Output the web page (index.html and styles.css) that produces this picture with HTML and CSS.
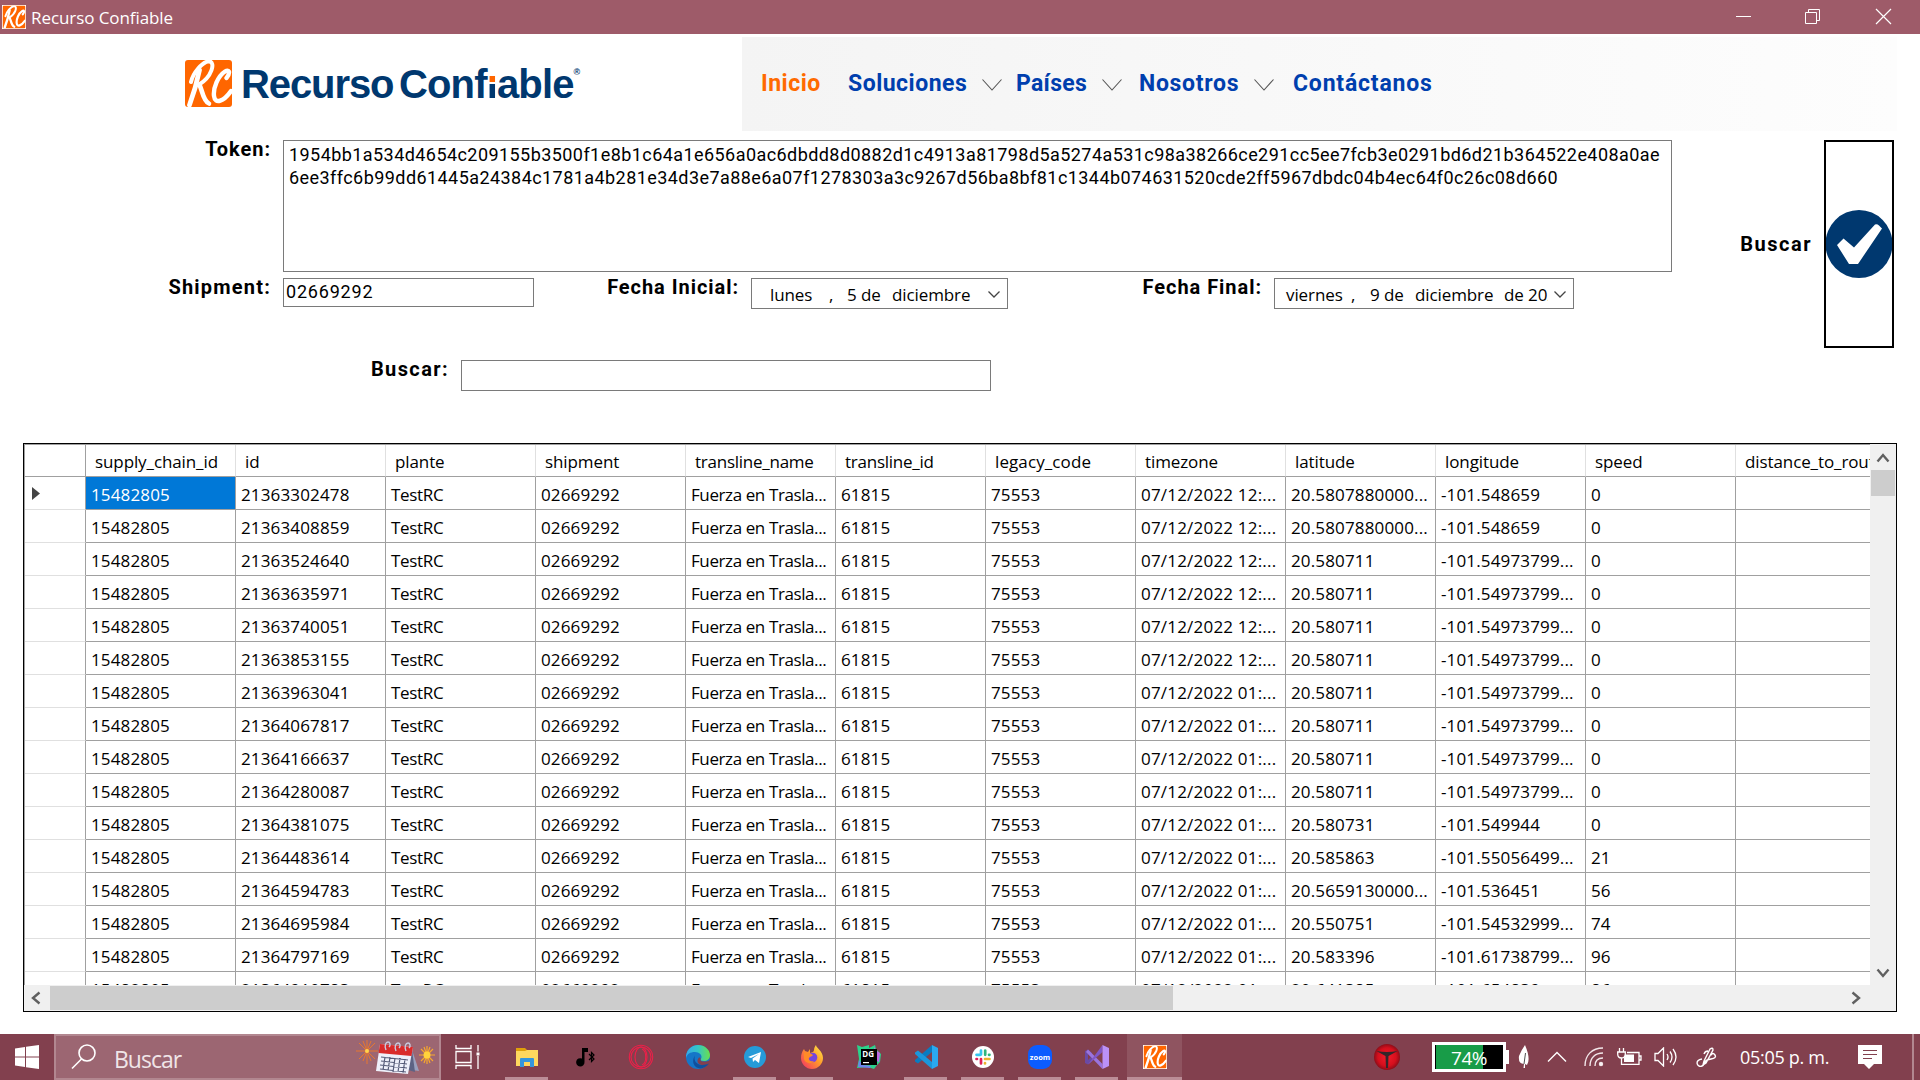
FILE: index.html
```html
<!DOCTYPE html>
<html lang="es">
<head>
<meta charset="utf-8">
<title>Recurso Confiable</title>
<link rel="stylesheet" href="styles.css">
</head>
<body>
<svg width="0" height="0" class="defs">
  <symbol id="rc" viewBox="0 0 47 47" preserveAspectRatio="none">
    <rect width="47" height="47" rx="3" fill="#ff6600"/>
    <g fill="none" stroke="#fff" stroke-linecap="round" stroke-linejoin="round">
      <path d="M14.500 10C12 22 9 33 4.500 45" stroke-width="4.800"/>
      <path d="M6 22C8 13 17 2 24 1.200C31 2 27 17 13.500 25" stroke-width="4"/>
      <path d="M14.500 25C17 29 18 41 24 43.500" stroke-width="4.600"/>
      <path d="M41.500 18C46 12 44 9 40 11.500C33 16 28 28 29 36C30 45 39 41 46 31" stroke-width="4.400"/>
    </g>
  </symbol>
</svg>

<header class="titlebar">
  <svg class="title-icon" width="24" height="24" viewBox="0 0 24 24"><rect width="24" height="24" fill="#fff"/><use href="#rc" x=".5" y=".5" width="23" height="23"/></svg>
  <span class="title-text">Recurso Confiable</span>
  <svg class="win-buttons" width="162" height="34" viewBox="0 0 162 34" fill="none" stroke="#fff">
    <path d="M1 16.500h15"/>
    <path d="M70.500 12.500h11v11h-11zM73.500 12v-2.500h11v11h-2.500"/>
    <path d="M141 9l15 15M156 9l-15 15" stroke-width="1.200"/>
  </svg>
</header>

<main class="app">
  <div class="brandbar">
    <svg class="logo-mark" width="47" height="47"><use href="#rc" width="47" height="47"/></svg>
    <div class="logo-text"><span class="w1">Recurso</span><span class="w2">Conf<span class="logo-i">i</span>able</span><span class="reg">®</span></div>
    <nav class="menu">
      <span class="m active">Inicio</span>
      <span class="m solu">Soluciones</span><svg class="chev" width="20" height="14"><path d="M.5 1.500L10 12L19.500 1.500"/></svg>
      <span class="m pais">Países</span><svg class="chev" width="20" height="14"><path d="M.5 1.500L10 12L19.500 1.500"/></svg>
      <span class="m noso">Nosotros</span><svg class="chev" width="20" height="14"><path d="M.5 1.500L10 12L19.500 1.500"/></svg>
      <span class="m cont">Contáctanos</span>
    </nav>
  </div>

  <section class="form">
    <div class="fields">
      <div class="row first">
        <span class="label l1">Token:</span>
        <div class="box token"><div>1954bb1a534d4654c209155b3500f1e8b1c64a1e656a0ac6dbdd8d0882d1c4913a81798d5a5274a531c98a38266ce291cc5ee7fcb3e0291bd6d21b364522e408a0ae</div><div>6ee3ffc6b99dd61445a24384c1781a4b281e34d3e7a88e6a07f1278303a3c9267d56ba8bf81c1344b074631520cde2ff5967dbdc04b4ec64f0c26c08d660</div></div>
      </div>
      <div class="row second">
        <span class="label l1">Shipment:</span>
        <div class="box ship">02669292</div>
        <span class="label l2">Fecha Inicial:</span>
        <div class="box date d1"><span>lunes</span><span>,</span><span>5 de</span><span>diciembre</span><svg width="14" height="9"><path d="M1.500 1.500L7 7L12.500 1.500"/></svg></div>
        <span class="label l3">Fecha Final:</span>
        <div class="box date d2"><span>viernes</span><span>,</span><span>9 de</span><span>diciembre</span><span class="yr">de 2022</span><svg width="14" height="9"><path d="M1.500 1.500L7 7L12.500 1.500"/></svg></div>
      </div>
      <div class="row third">
        <span class="label l4">Buscar:</span>
        <div class="box find"></div>
      </div>
    </div>
    <div class="go">
      <span class="label">Buscar</span>
      <div class="go-button">
        <svg width="66" height="68" viewBox="0 0 66 68"><ellipse cx="33" cy="34" rx="33.500" ry="34" fill="#00386f"/><path d="M11 35l6.500-6.500 10.500 9L49 14.500q2-1 4 1l3 3L32 54h-9z" fill="#fff"/></svg>
      </div>
    </div>
  </section>

  <section class="grid">
    <div class="view" id="view"></div>
    <div class="vbar">
      <svg width="14" height="12"><path d="M1.500 9.500L7 3L12.500 9.500"/></svg>
      <div class="vthumb"></div>
      <svg class="down" width="14" height="12"><path d="M1.500 2.500L7 9L12.500 2.500"/></svg>
    </div>
    <div class="hbar">
      <svg width="12" height="14"><path d="M9.500 1.500L3 7L9.500 12.500"/></svg>
      <div class="hthumb"></div>
      <svg class="right" width="12" height="14"><path d="M2.500 1.500L9 7L2.500 12.500"/></svg>
    </div>
  </section>
</main>

<footer class="taskbar">
  <div class="start"><svg width="24" height="24" viewBox="0 0 24 24" fill="#fff"><path d="M0 3.500l10-1.500v9.500H0zM11 1.800L24 0v11.500H11zM0 12.500h10V22L0 20.500zM11 12.500h13V24l-13-1.800z"/></svg></div>
  <div class="search">
    <svg class="lens" width="26" height="26" fill="none" stroke="#fff" stroke-width="1.600"><circle cx="16" cy="9" r="8"/><path d="M10.500 15L1 24.500"/></svg>
    <span class="search-text">Buscar</span>
    <svg class="party" width="80" height="34" viewBox="0 0 80 34">
      <g stroke="#e8772e" stroke-width="1"><path d="M11 0v24M0 11h22M3 3l16 16M19 3L3 19M7 1l8 20M15 1L7 21"/></g>
      <circle cx="11" cy="11" r="2" fill="#ffd34d"/>
      <path d="M56 10l7 21-7-1z" fill="#9aa0bd"/><path d="M56 10l-4 20 7 2z" fill="#5d6384"/>
      <path d="M24 4l33 3-5 27-32-3z" fill="#eef0fa"/>
      <path d="M24 4l33 3-1.500 9-33-3z" fill="#d92b2b"/>
      <path d="M25 17l27 3M25 21l26 3M24 25l27 3M24 29l26 3M29 17l-2 13M34 17l-2 14M39 18l-2 14M44 18l-2 14M49 19l-2 14" stroke="#555b78" stroke-width="1.200"/>
      <g fill="none" stroke="#c9cbe0" stroke-width="1.400"><path d="M30 10c-2-5 0-8 2-8s3 3 1 5M40 11c-2-5 0-8 2-8s3 3 1 5M50 11c-2-5 0-8 2-8s3 3 1 5"/></g>
      <g stroke="#f7a72e" stroke-width="1.200"><path d="M71 6v18M63 15h16M65 9l12 12M77 9l-12 12M68 7l6 16M74 7l-6 16"/></g>
      <circle cx="71" cy="15" r="3.500" fill="#ffd23c"/>
    </svg>
  </div>
  <div class="taskview"><svg width="25" height="24" viewBox="0 0 25 24" fill="none" stroke="#fff" stroke-width="1.300"><path d="M1 0v3.500h15V0M1 24v-3.500h15V24M1 6.500h15v11H1zM23 0v6.500M23 11v13"/><rect x="21.500" y="7.500" width="3" height="3" fill="#fff" stroke="none"/></svg></div>

  <div class="app-slot open"><svg width="24" height="24" viewBox="0 0 24 24"><path d="M1 3h9l2 2v3H1z" fill="#e0a00a"/><path d="M1 6h9l2-1h11v16H1z" fill="#ffd75e"/><path d="M5 22v-8q0-1 1-1h12q1 0 1 1v8h-4v-5H9v5z" fill="#3596dc"/></svg></div>
  <div class="app-slot"><svg width="24" height="24" viewBox="0 0 24 24"><path d="M10 3h6v4h-3.500v10a4.200 4.200 0 1 1-2.500-3.500z" fill="#000"/><path d="M17 9l5 5-2.500 2.500V7.500L22 10l-5 5" fill="none" stroke="#000" stroke-width="1.200"/></svg></div>
  <div class="app-slot"><svg width="26" height="26" viewBox="0 0 26 26" fill="none" stroke="#ec2049" stroke-width="1.100"><circle cx="13" cy="13" r="11.700"/><circle cx="13" cy="13" r="10"/><ellipse cx="13" cy="13" rx="6" ry="10"/><path d="M14 5c5 2 5 14 0 16"/></svg></div>
  <div class="app-slot"><svg width="24" height="24" viewBox="0 0 24 24"><defs><linearGradient id="e1"><stop stop-color="#36a8ec"/><stop offset=".5" stop-color="#34c6c4"/><stop offset="1" stop-color="#6adf4c"/></linearGradient></defs><circle cx="12" cy="12" r="12" fill="#1576c8"/><path d="M0 11C1 4 6 0 12 0c7 0 12 5 12 10 0 4-3 6-6 6-3 0-4-1-3-2C17 10 13 7 9 7 4 7 1 9 0 13z" fill="url(#e1)"/><path d="M24 15.500V19l-2 .5c-3 2-8 1-10-1.500-1-2-.5-4 1-5.500 1 0 2 .5 1.500 1.500-.5 2 1 2.500 4 2.500 2 0 4-.5 5.500-1.500z" fill="#82404e"/><path d="M9 10.500c-2.500 7 5 12 14 8-4 6-13 7-15.500 0-.8-3 0-6 1.500-8z" fill="#104f9c"/></svg></div>
  <div class="app-slot open"><svg width="22" height="22" viewBox="0 0 22 22"><circle cx="11" cy="11" r="11" fill="#259bd8"/><path d="M4 11l13-5-2 11-4-3-2 2-.5-3.500L15 8l-8 4z" fill="#fff"/></svg></div>
  <div class="app-slot open"><svg width="24" height="24" viewBox="0 0 24 24"><defs><linearGradient id="f1" x1="1" y1="0" x2="0" y2="1"><stop stop-color="#fff04a"/><stop offset=".45" stop-color="#ff9a2a"/><stop offset="1" stop-color="#f32a6a"/></linearGradient></defs><path d="M4 4l1 2 3 1 2-3v4c2-1 4-1 4-3 0-2 1-4 2-5 0 3 7 6 7 13 0 6-5 11-11 11S1 19 1 13c0-4 1-6 3-9z" fill="url(#f1)"/><circle cx="12.500" cy="12.500" r="4.800" fill="#7646dd"/><path d="M4 8c3-2 6 0 9 2-1 2-3 1-4 3s2 4 5 3c-3 4-9 2-10-2z" fill="#ff8b27"/></svg></div>
  <div class="app-slot"><svg width="24" height="24" viewBox="0 0 24 24"><path d="M0 0l5 2 7-2v3l6-3 1 4 5 5-1 8-3 3-3 4-6-2-11 1 2-9z" fill="#2bd28b"/><path d="M17 2l3 4 3 2-1 9-4-2z" fill="#c365e5"/><path d="M2 15l4 5 8 1-1 2-12-1z" fill="#6d83ef"/><rect x="4" y="4" width="16" height="16" fill="#000"/><text x="5.300" y="11.700" class="dg">DG</text><path d="M6 17h6v1.200H6z" fill="#fff"/></svg></div>
  <div class="app-slot open"><svg width="24" height="24" viewBox="0 0 24 24"><path d="M18 0l6 3v18l-6 3z" fill="#2aa9f0"/><path d="M18 0v7L4 18.500l-3-2v-1.500z" fill="#0a7bc0"/><path d="M18 24v-7L4 5.500l-3 2V9z" fill="#1b97dc"/></svg></div>
  <div class="app-slot open"><svg width="22" height="22" viewBox="0 0 22 22"><circle cx="11" cy="11" r="11" fill="#fff"/><g stroke-width="2.700" stroke-linecap="round"><path d="M9 4.500v4M4.500 8.800h4" stroke="#36c5f0"/><path d="M13.200 4.500v4.300M17.500 8.800h-.5" stroke="#2eb67d"/><path d="M13 13h4.500M13 17.500v-.5" stroke="#ecb22e"/><path d="M9 13v4.500M4.500 13H5" stroke="#e01e5a"/></g></svg></div>
  <div class="app-slot open"><svg width="24" height="24" viewBox="0 0 24 24"><rect width="24" height="24" rx="9" fill="#0b5cff"/><text x="12" y="14.500" class="zm">zoom</text></svg></div>
  <div class="app-slot open"><svg width="24" height="24" viewBox="0 0 24 24"><path d="M0 6l3-1.500L7 8v8l-4 3.500L0 18z" fill="#6a4aa5"/><path d="M3 9v6l3-3z" fill="#82404e"/><path d="M3 4.500L17.500 19V24L1 7z" fill="#9a74dd"/><path d="M3 19.500L17.500 0v7L5 18z" fill="#8057c4"/><path d="M17.500 0L24 3v18l-6.500 3z" fill="#bb91f7"/></svg></div>
  <div class="app-slot open current"><svg width="24" height="24" viewBox="0 0 24 24"><rect width="24" height="24" fill="#fff"/><use href="#rc" x=".5" y=".5" width="23" height="23"/></svg></div>

  <div class="tray">
    <svg class="t-red" width="26" height="26" viewBox="0 0 26 26"><defs><radialGradient id="r1"><stop stop-color="#f21c2b"/><stop offset=".7" stop-color="#d50f1d"/><stop offset="1" stop-color="#8e0d18"/></radialGradient></defs><circle cx="13" cy="13" r="13" fill="url(#r1)"/><path d="M2.500 7Q13 9 23.500 7L14.500 12 14 24h-2l-.5-12z" fill="#33262a"/></svg>
    <div class="battery"><div class="level"></div><span>74%</span></div><div class="nub"></div>
    <svg class="t-leaf" width="12" height="24"><path d="M7 0Q13 14 9 20L7 19v4H5.500l.5-4Q0 19 1 11q3-7 6-11z" fill="#fff"/><path d="M7.500 8L6 19" stroke="#222" stroke-width=".8"/></svg>
    <svg class="t-chev" width="20" height="12"><path d="M1 10.500L10 1.500L19 10.500" fill="none" stroke="#fff" stroke-width="1.400"/></svg>
    <svg class="t-wifi" width="20" height="20" fill="none" stroke="#f2e6e9" stroke-width="1.400"><path d="M1 19C1 8 8 1 19 1M6 19C6 11 11 6 19 6M11 19c0-5 3-8 8-8"/><circle cx="17" cy="17" r="1.500" fill="#fff"/></svg>
    <svg class="t-plug" width="26" height="18" fill="none" stroke="#fff" stroke-width="1.300"><path d="M2.500 0v3.500M6.500 0v3.500M.7 4h7.600v2q0 4-3.800 4t-3.800-4zM4.500 10v6.300H22V4.500H10M22 8h2v4h-2"/><path d="M8 6.500h9v7.500H7V10z" fill="#fff" stroke="none"/></svg>
    <svg class="t-vol" width="24" height="20" fill="none" stroke="#fff" stroke-width="1.300"><path d="M1 6.500h3L9.500 1v18L4 13.500H1zM13 7q2 3 0 6M16 4.500q4 5.500 0 11M19 2q6 8 0 16"/></svg>
    <svg class="t-pen" width="22" height="21" fill="none" stroke="#fff" stroke-width="1.400"><path d="M8 14L14 2q3-2 3 1L10 16l-3 2zM12 4q-3 0-4 3M6 12c-8 1-5 9 0 7 3-1 2-5 5-6l4-1q6-1 4-4t-4 0"/></svg>
    <span class="clock">05:05 p. m.</span>
    <svg class="t-note" width="24" height="25"><path d="M0 0h24v19h-8l-5 5-5-5H0z" fill="#fff"/><path d="M5 5.500h14M5 9.500h14M5 13.500h9" stroke="#82404e" stroke-width="1.200"/></svg>
    <div class="peek"></div>
  </div>
</footer>
<script src="script.js"></script>
</body>
</html>
```
FILE: styles.css
```css
* { box-sizing: border-box; }
body { margin: 0; width: 1920px; height: 1080px; overflow: hidden; display: flex; flex-direction: column; background: #fff; color: #000; font: 17px "Open Sans", sans-serif; }
svg { display: block; flex: none; }
.defs { position: absolute; }

.titlebar { flex: none; height: 34px; background: #9e5b69; display: flex; align-items: center; padding-left: 2px; }
.title-text { color: #fff; margin-left: 5px; line-height: 34px; letter-spacing: -.08px; padding-top: 1px; }
.win-buttons { margin-left: auto; margin-right: 23px; }

.app { flex: 1; min-height: 0; display: flex; flex-direction: column; padding-left: 23px; padding-right: 23px; }
.brandbar { flex: none; height: 97px; display: flex; padding-left: 162px; }
.logo-mark { margin-top: 26px; }
.logo-text { width: 510px; display: flex; padding: 27px 0 0 9px; font: 700 40px/46px "Liberation Sans", Arial, sans-serif; color: #00386f; white-space: nowrap; }
.w1 { width: 158px; letter-spacing: -1.100px; }
.w2 { letter-spacing: -.85px; }
.logo-i { background: linear-gradient(#fff 0 14px, #ff6600 14px 20.500px, #fff 20.500px 22px, #00386f 22px); -webkit-background-clip: text; background-clip: text; color: transparent; }
.reg { font-size: 9px; line-height: 10px; margin-top: 6px; }
.menu { flex: 1; height: 94px; margin-top: 3px; display: flex; align-items: center; padding-left: 19px; background: linear-gradient(90deg, #f4f4f4, #fdfdfd); }
.m { font: 700 23px/30px Roboto, sans-serif; letter-spacing: .5px; color: #003fae; }
.m.active { color: #ff6a00; width: 87px; }
.solu { width: 134px; } .pais { width: 86px; letter-spacing: .3px; } .noso { width: 115px; letter-spacing: .7px; } .cont { letter-spacing: .8px; }
.chev { margin-right: 14px; margin-top: 1px; fill: none; stroke: #555; stroke-width: 1.100; }
.menu .pais + .chev { margin-right: 17px; }
.menu .noso + .chev { margin-right: 19px; }

.form { flex: none; height: 303px; padding-top: 9px; display: flex; justify-content: space-between; }
.fields { width: 1649px; }
.row { display: flex; align-items: flex-start; }
.second { margin-top: 6px; height: 82px; }
.label { flex: none; text-align: right; font: 700 20px/24px Roboto, sans-serif; letter-spacing: .95px; margin-top: -3px; white-space: nowrap; }
.l1 { width: 248px; margin-right: 12px; }
.second .l1 { letter-spacing: 1.200px; }
.row.first .label { margin-top: -3px; }
.l2 { width: 205px; margin-right: 12px; }
.l3 { width: 254px; margin-right: 12px; }
.l4 { width: 426px; margin-right: 12px; }
.box { flex: none; border: 1px solid #7a7a7a; background: #fff; }
.token { width: 1389px; height: 132px; padding: 2px 0 0 5px; font: 18px/23px Roboto, sans-serif; letter-spacing: .435px; white-space: nowrap; }
.ship { width: 251px; height: 29px; padding-left: 2px; font: 18px/26px Roboto, sans-serif; letter-spacing: .8px; }
.date { height: 31px; line-height: 32px; display: grid; align-items: start; white-space: pre; letter-spacing: -.1px; }
.date svg { fill: none; stroke: #444; stroke-width: 1.300; margin-top: 11px; }
.d1 { width: 257px; padding-left: 18px; grid-template-columns: 59px 18px 45px 95px 14px; }
.d2 { width: 300px; padding-left: 11px; grid-template-columns: 65px 19px 45px 89px 44px 5px 14px; }
.d2 svg { grid-column: 7; }
.yr { overflow: hidden; }
.find { width: 530px; height: 31px; }
.third .label { margin-top: -3px; letter-spacing: 1.400px; }
.go { display: flex; align-items: center; height: 208px; margin-right: 3px; }
.go .label { margin-right: 12px; margin-top: 0; letter-spacing: 1.500px; }
.go-button { width: 70px; height: 208px; border: 2px solid #000; display: flex; align-items: center; justify-content: center; }

.grid { flex: none; width: 1874px; height: 569px; margin-top: 9px; border: 1px solid #000; display: grid; grid-template: 541px 26px / 1846px 26px; background: #f0f0f0; }
.view { overflow: hidden; background: #fff; border-left: 1px solid #a0a0a0; border-top: 1px solid #a0a0a0; }
.line { display: grid; grid-template-columns: 61px repeat(12, 150px); height: 33px; }
.line.head { height: 32px; }
.cell { height: 33px; line-height: 35.200px; padding-left: 5px; border-right: 1px solid #a0a0a0; border-bottom: 1px solid #a0a0a0; white-space: nowrap; overflow: hidden; letter-spacing: .15px; }
.cell.c2 { letter-spacing: -.3px; }
.cell.c4 { letter-spacing: -.4px; }
.cell.c7 { letter-spacing: .2px; }
.head .cell { height: 32px; line-height: 34px; padding-left: 9px; border-right-color: #e0e0e0; letter-spacing: -.1px; }
.head .c4, .head .c5 { letter-spacing: -.25px; }
.head .c6 { letter-spacing: .1px; }
.cell.mark { border-bottom-color: #e0e0e0; padding-left: 7px; display: flex; align-items: center; }
.head .cell.mark { border-right-color: #a0a0a0; border-bottom-color: #a0a0a0; }
.selected { background: #0078d7; color: #fff; }
.vbar { display: flex; flex-direction: column; align-items: center; padding-top: 8px; }
.vbar svg, .hbar svg { fill: none; stroke: #606060; stroke-width: 2.400; }
.vthumb { width: 24px; height: 26px; background: #cdcdcd; margin-top: 6px; }
.down { margin-top: auto; margin-bottom: 6px; }
.hbar { grid-column: 1; display: flex; align-items: center; padding-left: 6px; }
.hthumb { width: 1123px; height: 24px; background: #cdcdcd; margin-left: 8px; }
.right { margin-left: auto; margin-right: 8px; }

.taskbar { flex: none; height: 46px; background: #82404e; display: flex; align-items: stretch; color: #fff; }
.start { width: 54px; display: flex; align-items: center; padding-left: 15px; }
.search { width: 387px; background: #9c6672; border: 2px solid #b28790; display: flex; align-items: center; }
.lens { margin-left: 15px; }
.search-text { font-size: 23px; line-height: 42px; letter-spacing: -1px; color: #f0e5e8; margin-left: 17px; padding-top: 3px; }
.party { margin-left: auto; margin-right: 3px; }
.taskview { width: 57px; display: flex; align-items: center; padding-left: 14px; }
.app-slot { width: 57px; display: flex; align-items: center; justify-content: center; position: relative; }
.open::after { content: ""; position: absolute; left: 7px; right: 7px; bottom: 0; height: 3px; background: #bb8d97; }
.current { background: #8f5460; width: 55px; margin-left: 2px; }
.current::after { left: 0; right: 0; }
.dg { font: 700 8px "Open Sans", sans-serif; fill: #fff; }
.zm { font: 700 7.500px "Open Sans", sans-serif; fill: #fff; text-anchor: middle; }
.tray { margin-left: auto; display: flex; align-items: center; }
.battery { width: 74px; height: 30px; border: 3px solid #fff; background: #000; margin-left: 32px; position: relative; display: flex; align-items: center; justify-content: center; }
.level { position: absolute; left: 1px; top: 0; width: 47px; height: 24px; background: #189c48; }
.battery span { position: relative; font-size: 19px; letter-spacing: -.5px; line-height: 24px; padding-top: 1px; }
.nub { width: 3px; height: 14px; background: #fff; }
.t-leaf { margin-left: 9px; }
.t-chev { margin-left: 17px; }
.t-wifi { margin-left: 17px; }
.t-plug { margin-left: 13px; }
.t-vol { margin-left: 11px; }
.t-pen { margin-left: 18px; }
.clock { margin-left: 22px; width: 91px; font-size: 18px; letter-spacing: -.3px; white-space: nowrap; }
.t-note { margin-left: 27px; }
.peek { width: 2px; height: 46px; background: #b28790; margin-left: 30px; margin-right: 6px; }
```
FILE: script.js
```js
const columns = ["supply_chain_id", "id", "plante", "shipment", "transline_name", "transline_id",
  "legacy_code", "timezone", "latitude", "longitude", "speed", "distance_to_route"];

// id, hour, latitude, longitude, speed
const rows = [
  ["21363302478", "12", "20.5807880000...", "-101.548659", "0"],
  ["21363408859", "12", "20.5807880000...", "-101.548659", "0"],
  ["21363524640", "12", "20.580711", "-101.54973799...", "0"],
  ["21363635971", "12", "20.580711", "-101.54973799...", "0"],
  ["21363740051", "12", "20.580711", "-101.54973799...", "0"],
  ["21363853155", "12", "20.580711", "-101.54973799...", "0"],
  ["21363963041", "01", "20.580711", "-101.54973799...", "0"],
  ["21364067817", "01", "20.580711", "-101.54973799...", "0"],
  ["21364166637", "01", "20.580711", "-101.54973799...", "0"],
  ["21364280087", "01", "20.580711", "-101.54973799...", "0"],
  ["21364381075", "01", "20.580731", "-101.549944", "0"],
  ["21364483614", "01", "20.585863", "-101.55056499...", "21"],
  ["21364594783", "01", "20.5659130000...", "-101.536451", "56"],
  ["21364695984", "01", "20.550751", "-101.54532999...", "74"],
  ["21364797169", "01", "20.583396", "-101.61738799...", "96"],
  ["21364910783", "01", "20.641385", "-101.654839", "86"]
];

const line = (cells, cls, mark) =>
  `<div class="line ${cls}"><div class="cell mark">${mark}</div>${cells.map((t, i) =>
    `<div class="cell c${i}${cls === "first-row" && i === 0 ? " selected" : ""}">${t}</div>`).join("")}</div>`;

const arrow = '<svg width="9" height="13"><path d="M0 0l8 6.500L0 13z" fill="#444"/></svg>';

document.getElementById("view").innerHTML =
  line(columns, "head", "") +
  rows.map(([id, h, lat, lng, speed], i) =>
    line(["15482805", id, "TestRC", "02669292", "Fuerza en Trasla...", "61815", "75553",
      `07/12/2022 ${h}:...`, lat, lng, speed, ""], i ? "" : "first-row", i ? "" : arrow)).join("");
```
